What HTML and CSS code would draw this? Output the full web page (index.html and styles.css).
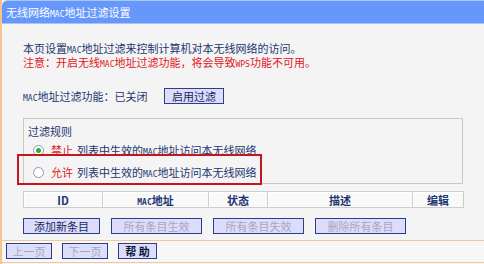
FILE: index.html
```html
<!DOCTYPE html>
<html lang="zh-CN">

<head>
    <meta charset="UTF-8">
    <meta name="viewport" content="width=device-width, initial-scale=1.0">
    <title>无线网络MAC地址过滤设置</title>
    <link rel="stylesheet" href="styles.css">
</head>

<body>
    <div class="panel">
        <div class="title">无线网络<span class="latin">MAC</span>地址过滤设置</div>

        <div class="content">
            <p class="info">本页设置<span class="latin">MAC</span>地址过滤来控制计算机对本无线网络的访问。</p>
            <p class="warn">注意：开启无线<span class="latin">MAC</span>地址过滤功能，将会导致<span class="latin">WPS</span>功能不可用。</p>

            <div class="status-row">
                <span class="status"><span class="latin">MAC</span>地址过滤功能：已关闭</span>
                <button class="btn btn-enable">启用过滤</button>
            </div>

            <div class="rules">
                <div class="rules-title">过滤规则</div>
                <div class="rule">
                    <span class="radio checked"></span>
                    <span class="red">禁止</span>
                    <span class="rule-text">列表中生效的<span class="latin">MAC</span>地址访问本无线网络</span>
                </div>
                <div class="rule marked">
                    <span class="radio"></span>
                    <span class="red">允许</span>
                    <span class="rule-text">列表中生效的<span class="latin">MAC</span>地址访问本无线网络</span>
                </div>
            </div>

            <table class="list">
                <tr>
                    <th class="col-id">ID</th>
                    <th class="col-mac"><span class="latin">MAC</span>地址</th>
                    <th class="col-state">状态</th>
                    <th class="col-desc">描述</th>
                    <th class="col-edit">编辑</th>
                </tr>
            </table>

            <div class="actions">
                <button class="btn btn-add">添加新条目</button>
                <button class="btn btn-wide" disabled>所有条目生效</button>
                <button class="btn btn-wide" disabled>所有条目失效</button>
                <button class="btn btn-wide" disabled>删除所有条目</button>
            </div>
        </div>

        <div class="footer">
            <button class="btn btn-page" disabled>上一页</button>
            <button class="btn btn-page" disabled>下一页</button>
            <button class="btn btn-help">帮 助</button>
        </div>
    </div>
</body>

</html>
```

FILE: styles.css
```css
body {
    margin: 0;
    background-color: #f4f4f4;
    font-family: "Noto Sans CJK SC", "Liberation Sans", sans-serif;
    font-size: 11px;
    color: #1c3670;
}

.latin {
    font-family: "DejaVu Sans Mono", monospace;
    font-size: 8px;
    line-height: 1;
}

.panel {
    width: 484px;
    height: 264px;
    border-left: 2px solid #f6c48e;
    box-sizing: border-box;
    overflow: hidden;
}

.title {
    height: 22px;
    line-height: 22px;
    padding-left: 4px;
    background-color: #6697fb;
    border-top: 1px solid #a9c6f4;
    border-bottom: 1px solid #a8c4f6;
    border-top-left-radius: 6px;
    color: white;
}

.content {
    padding: 17px 0 6px 21px;
    border-bottom: 1px solid #f2c79a;
}

p {
    margin: 0;
    height: 14px;
    line-height: 14px;
}

.warn {
    color: #e0181c;
}

.status-row {
    display: flex;
    align-items: center;
    margin-top: 19px;
    height: 16px;
}

.status {
    width: 141px;
}

.btn {
    height: 16px;
    padding: 0;
    border: 1px solid #2c3f86;
    background-color: #dcdcfc;
    font-family: "Noto Sans CJK SC", sans-serif;
    font-size: 11px;
    line-height: 14px;
    color: #1a2a5a;
}

.btn:disabled {
    color: #a8a8b8;
}

.btn-enable {
    width: 60px;
}

.rules {
    position: relative;
    width: 440px;
    margin-top: 14px;
    padding: 5px 0 0 4px;
    border: 1px solid #c9c9c6;
    box-sizing: border-box;
}

.rules-title {
    height: 15px;
    line-height: 14px;
}

.rule {
    display: flex;
    align-items: center;
    height: 22px;
    padding-left: 5px;
}

.red {
    color: #e0181c;
}

.rule-text {
    margin-left: 4px;
}

.radio {
    width: 11px;
    height: 11px;
    margin-right: 7px;
    border: 1px solid #8c9ab0;
    border-radius: 50%;
    background-color: white;
    box-sizing: border-box;
    display: flex;
    align-items: center;
    justify-content: center;
}

.radio.checked::before {
    content: "";
    width: 5px;
    height: 5px;
    border-radius: 50%;
    background-color: #34a83a;
}

/* red annotation box drawn over the second rule */
.marked::after {
    content: "";
    position: absolute;
    left: -7px;
    top: 35px;
    width: 245px;
    height: 31px;
    border: 2px solid #c4161c;
    box-sizing: border-box;
}

.list {
    margin-top: 7px;
    width: 441px;
    border-collapse: collapse;
}

.list th {
    height: 15px;
    padding: 0;
    border: 1px solid #cdcdcd;
    background-color: #f9f9f9;
    font-weight: bold;
    font-size: 11px;
    line-height: 14px;
    color: #1c3670;
    box-shadow: inset 1px 1px 0 white;
}

.col-id {
    width: 78px;
}

.col-mac {
    width: 105px;
}

.col-state {
    width: 58px;
}

.col-desc {
    width: 144px;
}

.actions {
    display: flex;
    gap: 11px;
    margin-top: 10px;
}

.btn-add {
    width: 77px;
}

.btn-wide {
    width: 91px;
}

.footer {
    display: flex;
    gap: 10px;
    padding: 2px 0 0 4px;
    height: 19px;
    background-color: #f7f7f7;
    border-bottom: 1px solid #f2c79a;
}

.btn-page {
    width: 46px;
}

.btn-help {
    width: 39px;
    font-weight: bold;
    color: #111a3a;
}
```
